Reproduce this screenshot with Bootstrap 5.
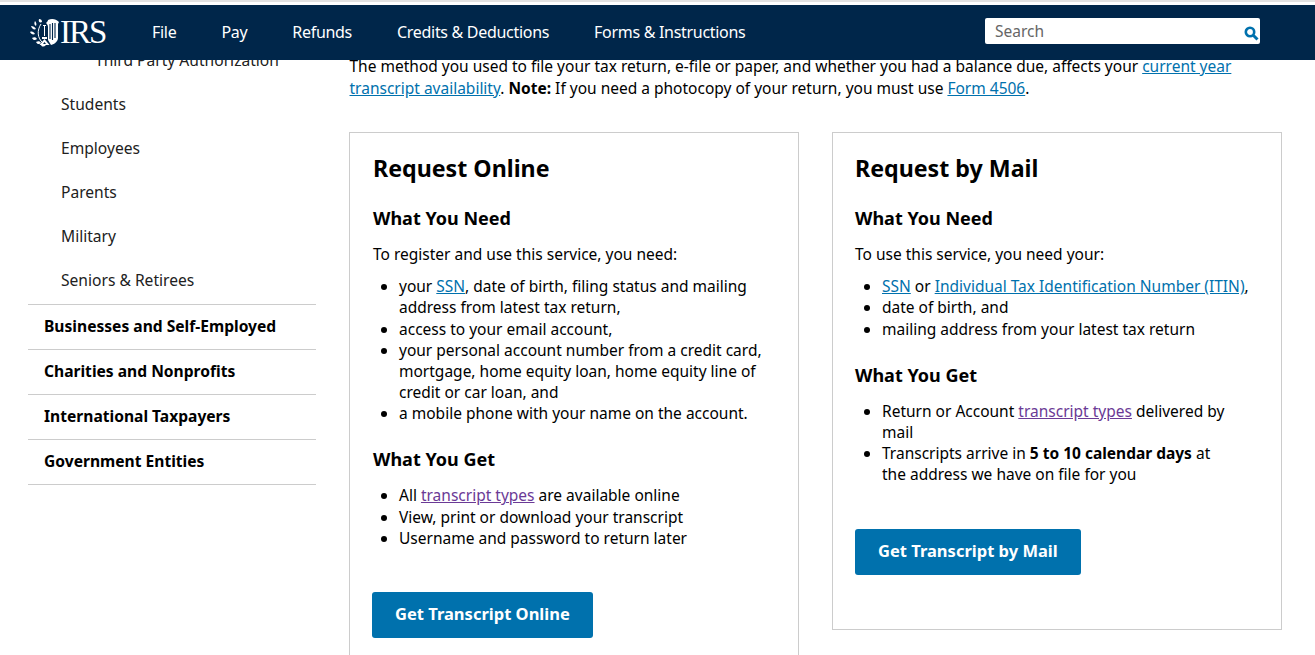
<!DOCTYPE html>
<html lang="en">
<head>
<meta charset="UTF-8" />
<meta name="viewport" content="width=device-width, initial-scale=1.0" />
<title>Get Transcript</title>
<link href="https://cdn.jsdelivr.net/npm/bootstrap@5.3.3/dist/css/bootstrap.min.css" rel="stylesheet" />
<style>
html, body { height: 100%; overflow: hidden; }
body {
    font-family: "Noto Sans", "Open Sans", sans-serif;
    font-size: 15.5px;
    line-height: 21.17px;
    color: #000;
    background: #fff;
}
.top-edge { height: 5px; background: #fff; border-top: 2px solid #e2e2e2; }
.irs-bar {
    top: 5px;
    height: 55px;
    background: #00264a;
    padding: 0 55px 0 30px;
}
.irs-brand { width: 76px; margin-right: 46px; margin-top: -1px; flex: none; color: #fff; text-decoration: none; }
.irs-logo { width: 30px; height: 30px; flex: none; }
.irs-word { font-family: "Liberation Serif", serif; font-size: 33px; line-height: 30px; letter-spacing: -2px; }
.irs-link { color: #fff; text-decoration: none; font-size: 16px; letter-spacing: -0.3px; margin-right: 45px; }
.irs-search { width: 275px; height: 26px; margin-top: -3px; background: #fff; border-radius: 2px; color: #666; padding: 0 10px; line-height: 26px; }
.irs-search svg { width: 15px; height: 15px; margin-top: 8px; margin-right: -9px; }
.page-wrap { padding: 50px 33px 0 28px; gap: 33px; }
.side-col { width: 288px; flex: none; font-size: 15.6px; }
.side-sub { padding: 12px 0 11px 33px; height: 44px; color: #212121; }
.side-sub.first { padding: 0 0 0 67px; height: 32px; margin-top: -5px; }
.side-sub.before-top { margin-bottom: 2px; }
.side-top { height: 45px; padding: 11px 16px; font-weight: 700; border-top: 1px solid #ccc; }
.side-top.last { border-bottom: 1px solid #ccc; height: 46px; }
.main-col { flex: 1; min-width: 0; }
.intro { margin: 0 30px 33px 0.5px; line-height: 22px; }
a { color: #0071ad; }
a.seen { color: #6b3a96; }
.req-box { width: 450px; border: 1px solid #ccc; padding: 20px 23px 0; }
.req-box.tall { height: 600px; }
.req-box.short { height: 498px; padding-left: 22px; }
.req-box.short ul { padding-left: 27px; }
.req-box h2 { font-size: 23.2px; font-weight: 700; line-height: 30px; margin: 0 0 22px; }
.req-box h3 { font-size: 18px; font-weight: 700; line-height: 26px; margin: 0 0 13px; }
.req-box p { margin: 0 0 11px; }
.req-box ul { margin: 0 0 22px; padding-left: 26px; }
.get-btn {
    background: #0071ad;
    border: 0;
    border-radius: 3px;
    color: #fff;
    font-weight: 700;
    font-size: 16.5px;
    padding: 11px 23px 14px;
    line-height: 21px;
    margin-top: 21px;
}
.tall .get-btn { margin-left: -1px; }
.short .get-btn { margin-top: 22px; }
</style>
</head>
<body>
<div class="top-edge"></div>
<nav class="irs-bar position-fixed start-0 end-0 d-flex align-items-center z-3">
    <a class="irs-brand d-flex" href="#">
        <svg class="irs-logo" viewBox="0 0 30 30" aria-hidden="true">
            <!-- wreath -->
            <path fill="#fff" d="M9 2c2 0 3 1 3 3-2 1-4 0-3-3zM5 4c1 1 2 3 1 5-2-1-2-3-1-5zM1 9c2 0 4 1 5 3-2 1-4 0-5-3zM0 15c2-1 4 0 5 2-2 1-4 0-5-2zM2 21c2-1 4-1 5 1-2 2-4 1-5-1zM6 25c2-1 4-1 5 1-2 2-4 1-5-1zM11 28c2-1 4-1 5 0-2 2-4 2-5 0z"/>
            <path d="M11 7C7 13 7 21 13 26" fill="none" stroke="#fff" stroke-width="1"/>
            <!-- pillar and scales -->
            <path fill="#fff" d="M13 8h3v1h-1v10h-1V9h-1zM12 20h5v2h-5z"/>
            <path fill="#fff" d="M14.500 22l5 6H9.500z"/>
            <path fill="#00264a" d="M14.500 25l1.500 2h-3z"/>
            <!-- eagle wing -->
            <path fill="#fff" d="M18 3c4-2 8-1 11 2l-1 2v14c0 3-3 6-7 7l-3-5V10c0-2-1-3-2-4 1-1 2-2 2-3z"/>
            <path stroke="#00264a" stroke-width="1.100" d="M20 7v15M22.500 6v17M25 6v15"/>
        </svg>
        <span class="irs-word">IRS</span>
    </a>
    <a class="irs-link" href="#">File</a>
    <a class="irs-link" href="#">Pay</a>
    <a class="irs-link" href="#">Refunds</a>
    <a class="irs-link" href="#">Credits &amp; Deductions</a>
    <a class="irs-link" href="#">Forms &amp; Instructions</a>
    <div class="irs-search ms-auto d-flex justify-content-between">
        <span>Search</span>
        <svg viewBox="0 0 15 15"><circle cx="6" cy="6" r="4.200" fill="none" stroke="#0071ad" stroke-width="2.600"/><path d="m9.500 9.500 4 4" stroke="#0071ad" stroke-width="3"/></svg>
    </div>
</nav>
<div class="page-wrap d-flex">
    <aside class="side-col">
        <div class="side-sub first">Third Party Authorization</div>
        <div class="side-sub">Students</div>
        <div class="side-sub">Employees</div>
        <div class="side-sub">Parents</div>
        <div class="side-sub">Military</div>
        <div class="side-sub before-top">Seniors &amp; Retirees</div>
        <div class="side-top">Businesses and Self-Employed</div>
        <div class="side-top">Charities and Nonprofits</div>
        <div class="side-top">International Taxpayers</div>
        <div class="side-top last">Government Entities</div>
    </aside>
    <main class="main-col">
        <p class="intro">The method you used to file your tax return, e-file or paper, and whether you had a balance due, affects your <a href="#">current year transcript availability</a>. <b>Note:</b> If you need a photocopy of your return, you must use <a href="#">Form 4506</a>.</p>
        <div class="d-flex align-items-start">
            <section class="req-box tall">
                <h2>Request Online</h2>
                <h3>What You Need</h3>
                <p>To register and use this service, you need:</p>
                <ul>
                    <li>your <a href="#">SSN</a>, date of birth, filing status and mailing address from latest tax return,</li>
                    <li>access to your email account,</li>
                    <li>your personal account number from a credit card, mortgage, home equity loan, home equity line of credit or car loan, and</li>
                    <li>a mobile phone with your name on the account.</li>
                </ul>
                <h3>What You Get</h3>
                <ul>
                    <li>All <a class="seen" href="#">transcript types</a> are available online</li>
                    <li>View, print or download your transcript</li>
                    <li>Username and password to return later</li>
                </ul>
                <button class="btn get-btn" type="button">Get Transcript Online</button>
            </section>
            <section class="req-box short ms-auto">
                <h2>Request by Mail</h2>
                <h3>What You Need</h3>
                <p>To use this service, you need your:</p>
                <ul>
                    <li><a href="#">SSN</a> or <a href="#">Individual Tax Identification Number (ITIN)</a>,</li>
                    <li>date of birth, and</li>
                    <li>mailing address from your latest tax return</li>
                </ul>
                <h3>What You Get</h3>
                <ul>
                    <li>Return or Account <a class="seen" href="#">transcript types</a> delivered by mail</li>
                    <li>Transcripts arrive in <b>5 to 10 calendar days</b> at<br>the address we have on file for you</li>
                </ul>
                <button class="btn get-btn" type="button">Get Transcript by Mail</button>
            </section>
        </div>
    </main>
</div>
<script src="https://cdn.jsdelivr.net/npm/bootstrap@5.3.3/dist/js/bootstrap.bundle.min.js"></script>
</body>
</html>
